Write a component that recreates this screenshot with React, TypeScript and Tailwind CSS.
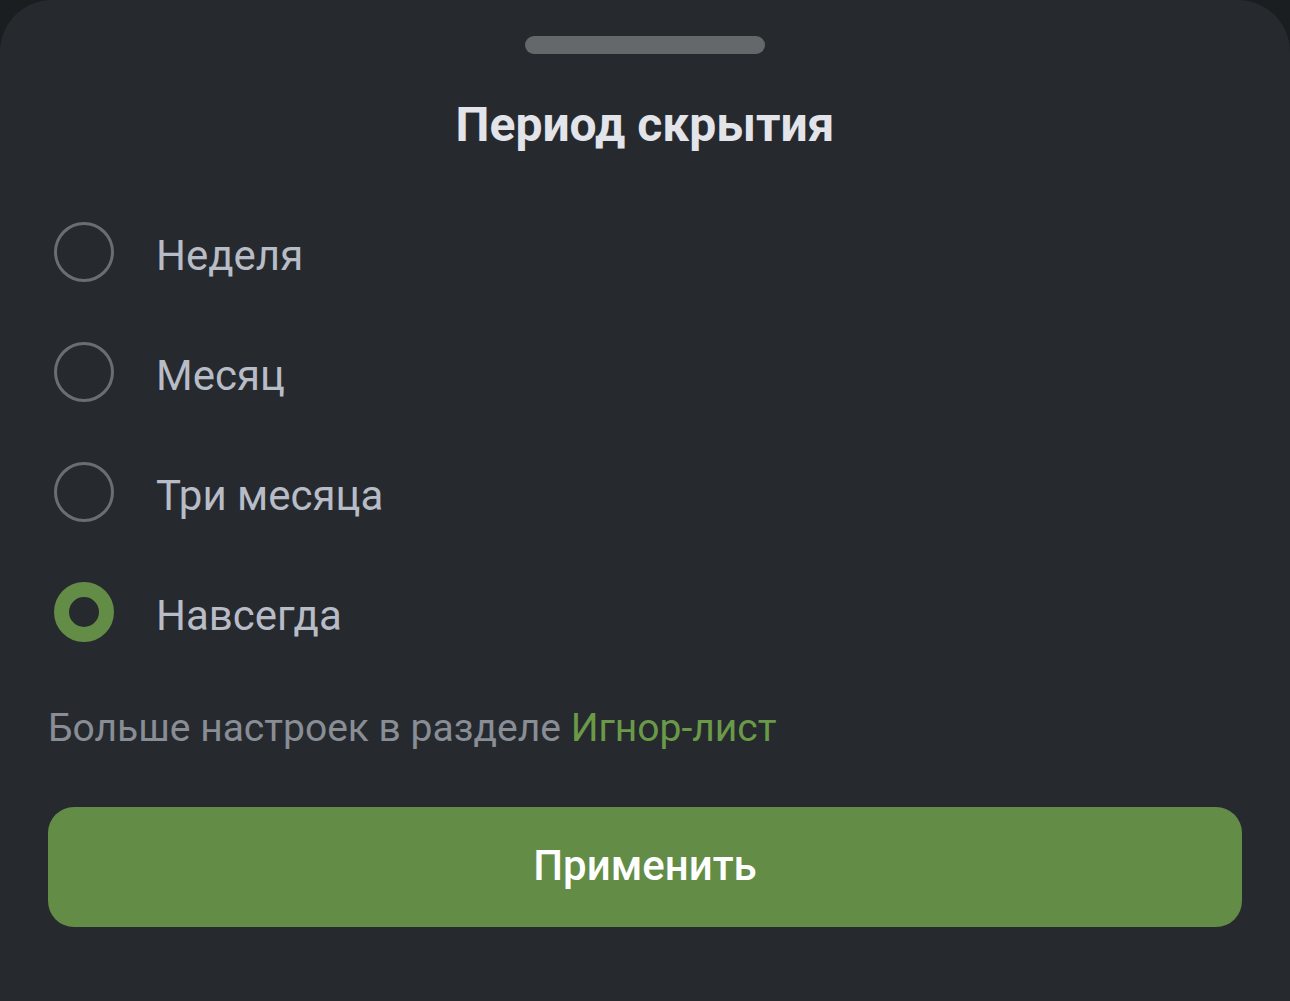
import { useState } from 'react';

const options = ['Неделя', 'Месяц', 'Три месяца', 'Навсегда'];

function Radio({ checked }: { checked: boolean }) {
  return checked ? (
    <span className="block h-[60px] w-[60px] shrink-0 rounded-full border-[15px] border-[#638c46]" />
  ) : (
    <span className="block h-[60px] w-[60px] shrink-0 rounded-full border-[3px] border-[#6a6e73]" />
  );
}

export default function App() {
  const [selected, setSelected] = useState(3);

  return (
    <div className="min-h-[1001px] w-full bg-[#1b1e21] font-['Roboto',sans-serif]">
      <div className="flex min-h-[1001px] flex-col rounded-t-[52px] bg-[#262a2f] px-12 pt-9">
        <div className="mx-auto h-[18px] w-[240px] rounded-full bg-[#64686b]" />

        <h1 className="mt-[41px] text-center text-[48px] font-bold leading-[60px] text-[#e2e4ea]">
          Период скрытия
        </h1>

        <div className="mt-[37px] flex flex-col">
          {options.map((label, i) => (
            <button
              key={label}
              onClick={() => setSelected(i)}
              className="flex h-[120px] items-center gap-[42px] pl-[6px] text-left"
            >
              <Radio checked={selected === i} />
              <span className="pt-2 text-[42px] leading-none text-[#b8bcc6]">{label}</span>
            </button>
          ))}
        </div>

        <p className="mt-8 text-[39px] leading-[48px] text-[#898d95]">
          Больше настроек в разделе <span className="text-[#6a9a48]">Игнор-лист</span>
        </p>

        <button className="mt-[55px] h-[120px] w-full rounded-[26px] bg-[#638c46] pb-1 text-[42px] font-medium text-white">
          Применить
        </button>
      </div>
    </div>
  );
}
